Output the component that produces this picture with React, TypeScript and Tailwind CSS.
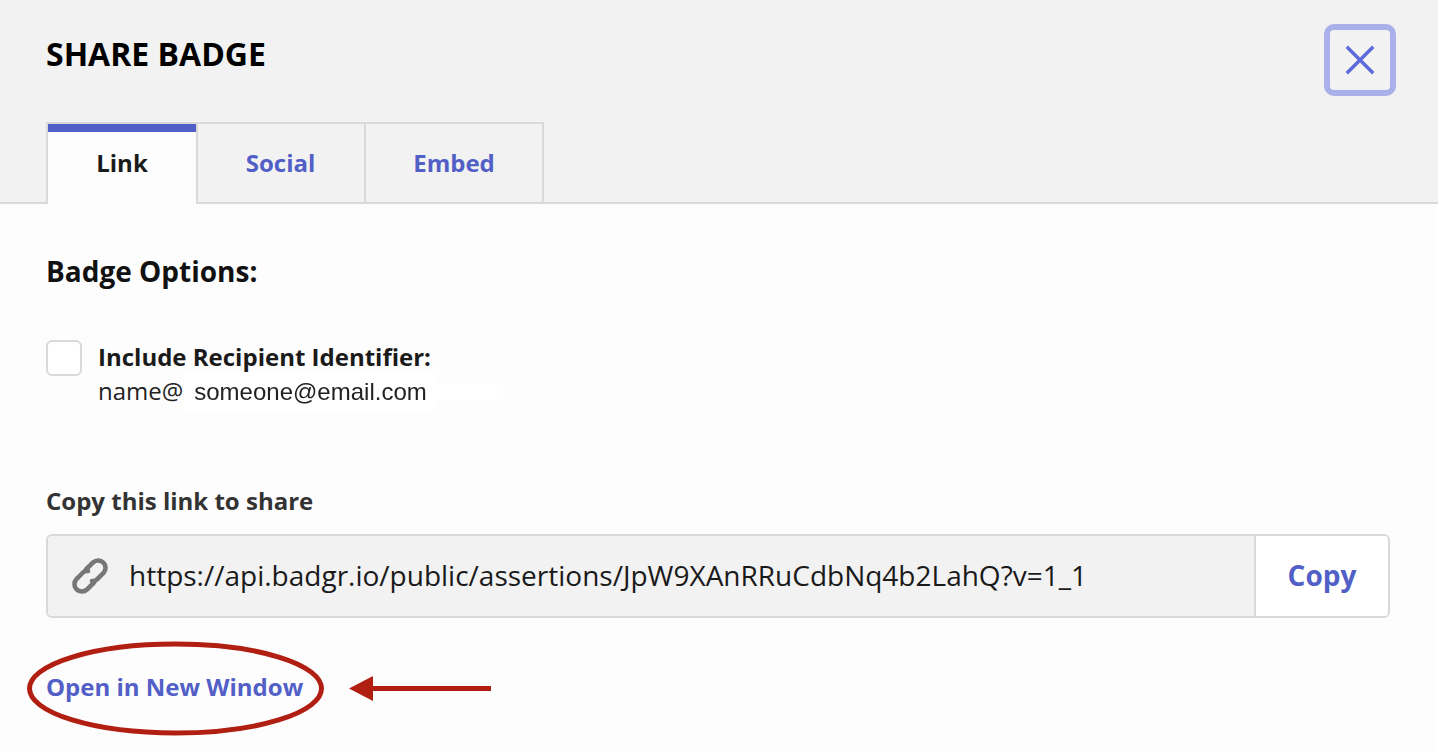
import React from "react";

const font = { fontFamily: '"Open Sans", "Noto Sans", sans-serif' };

export default function App() {
  return (
    <div className="relative w-[1438px] h-[752px] overflow-hidden bg-[#fdfdfd]" style={font}>
      <header className="relative h-[204px] bg-[#f2f2f2] border-b-2 border-[#d9d9d9] pl-[46px] pr-[42px]">
        <div className="flex justify-between items-start h-[122px]">
          <h1 className="mt-[34px] text-[32px] leading-[40px] font-bold text-black">SHARE BADGE</h1>
          <button className="mt-[24px] w-[72px] h-[72px] rounded-[10px] border-[6px] border-[#a9b0ea] flex items-center justify-center">
            <svg width="30" height="30" viewBox="0 0 30 30" fill="none" stroke="#5a69dc" strokeWidth="3.4" strokeLinecap="square">
              <path d="M3 3 L27 27 M27 3 L3 27" />
            </svg>
          </button>
        </div>
        <nav className="flex h-[82px]">
          <div className="w-[152px] h-[82px] border-x-2 border-t-2 border-[#d9d9d9] bg-[#fdfdfd] flex flex-col">
            <div className="h-[8px] bg-[#525fc7]" />
            <div className="flex-1 flex items-center justify-center text-[24px] font-bold text-[#1a1a1a] pb-[10px]">Link</div>
          </div>
          <div className="w-[170px] h-[80px] -ml-[2px] border-x-2 border-t-2 border-[#d9d9d9] flex items-center justify-center text-[24px] font-bold text-[#525fc7] pr-[1px]">Social</div>
          <div className="w-[180px] h-[80px] -ml-[2px] border-x-2 border-t-2 border-[#d9d9d9] flex items-center justify-center text-[24px] font-bold text-[#525fc7]">Embed</div>
        </nav>
      </header>

      <main className="pl-[46px] pr-[48px]">
        <h2 className="mt-[49px] text-[28px] leading-[36px] font-bold text-[#111]">Badge Options:</h2>
        <div className="mt-[52px] flex">
          <div className="w-[36px] h-[36px] rounded-[6px] border-2 border-[#d9d9d9] bg-white shrink-0 mt-[-1px]" />
          <div className="ml-[16px] -mt-[1px]">
            <div className="text-[24px] leading-[34px] font-bold text-[#1a1a1a]">Include Recipient Identifier:</div>
            <div className="flex h-[34px] items-center">
              <span className="text-[24px] leading-[34px] text-[#222]">name@</span>
              <span className="ml-[1px] w-[253px] h-[37px] bg-white pl-[10px] leading-[37px] text-[24px] text-[#222] font-['Liberation_Sans',sans-serif] blur-[0.4px]">someone@email.com</span>
              <span className="w-[66px] h-[17px] bg-white" />
            </div>
          </div>
        </div>

        <label className="block mt-[76px] text-[24px] leading-[34px] font-bold text-[#333]">Copy this link to share</label>
        <div className="mt-[16px] flex h-[84px] border-2 border-[#d9d9d9] rounded-[6px] overflow-hidden">
          <div className="flex-1 bg-[#f2f2f2] flex items-center pl-[24px]">
            <svg width="36" height="36" viewBox="0 0 36 36" fill="none" stroke="#777" strokeWidth="4.6" strokeLinecap="round" strokeLinejoin="round">
              <path d="M14 11.5 L21.07 4.47 A7.4 7.4 0 0 1 31.53 14.93 L25 21.46 Q23 23.5 20 23" />
              <path d="M22 24.5 L14.93 31.53 A7.4 7.4 0 0 1 4.47 21.07 L11 14.5 Q13 12.5 16 13" />
            </svg>
            <span className="ml-[21px] text-[28px] text-[#1a1a1a] pb-[2px]">https://api.badgr.io/public/assertions/JpW9XAnRRuCdbNq4b2LahQ?v=1_1</span>
          </div>
          <div className="w-[134px] bg-white border-l-2 border-[#d9d9d9] flex items-center justify-center text-[28px] font-bold text-[#525fc7] pb-[2px]">Copy</div>
        </div>
        <a className="block mt-[51px] text-[24px] leading-[36px] font-bold text-[#525fc7]">Open in New Window</a>
      </main>

      <svg className="absolute left-0 top-[630px]" width="520" height="122" viewBox="0 0 520 122" fill="none">
        <ellipse cx="175.5" cy="58.5" rx="146" ry="44.5" stroke="#b11e12" strokeWidth="5" />
        <path d="M372 58.5 H491" stroke="#b11e12" strokeWidth="5" />
        <path d="M349 58.5 L373 46 V71 Z" fill="#b11e12" />
      </svg>
    </div>
  );
}
